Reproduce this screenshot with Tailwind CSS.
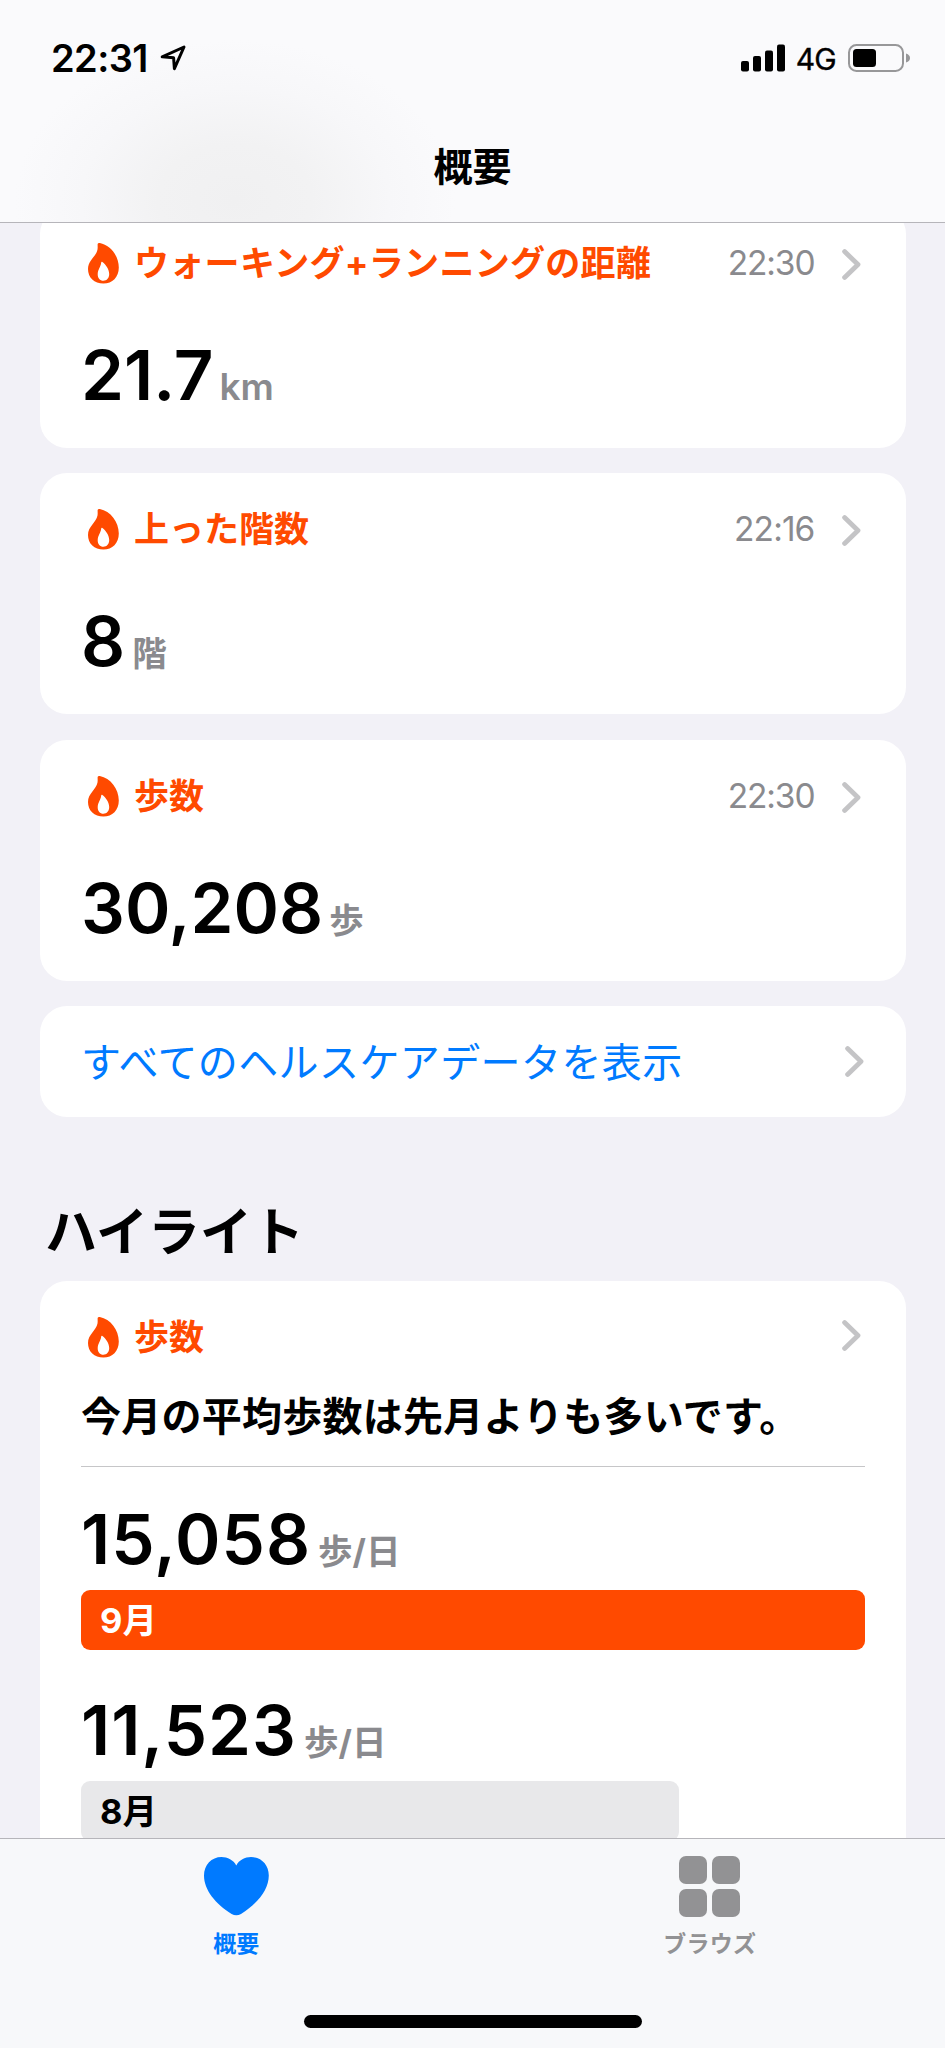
<!DOCTYPE html>
<html lang="ja">
<head>
<meta charset="utf-8">
<title>概要</title>
<script src="https://cdn.jsdelivr.net/npm/@tailwindcss/browser@4"></script>
</head>
<body class="bg-[#f2f1f7] text-black font-['Inter','Noto_Sans_CJK_JP',sans-serif]">
<svg class="hidden">
  <symbol id="flame" viewBox="0 0 31 41"><path fill-rule="evenodd" d="M9.6 1.6C9.6.4 10.6-.1 11.8.1C22.5 2.2 30.8 13 30.8 24.5C30.8 34.2 24.5 40.6 15.4 40.6C6.3 40.6 0 34.6 0 26C0 17.5 8.2 13.5 9.5 6.5C9.8 4.8 9.6 3.2 9.6 1.6ZM13.2 19.4C12.8 24 9.7 26.5 9.7 31.2C9.7 35.2 12 37.7 15.4 37.7C18.8 37.7 21.2 35 21.2 31C21.2 26.2 17.8 21.6 14.4 19C13.9 18.6 13.3 18.7 13.2 19.4Z"/></symbol>
  <symbol id="chevron" viewBox="0 0 19 31"><path d="M2.6 2.6L16 15.5L2.6 28.4" fill="none" stroke="currentColor" stroke-width="4.8" stroke-linecap="round" stroke-linejoin="round"/></symbol>
</svg>
<div class="flex h-[2048px] w-[945px] flex-col overflow-hidden">
  <header class="relative z-10 flex h-[223px] shrink-0 flex-col border-b border-[#b6b5ba] bg-[#fafafc] bg-[radial-gradient(ellipse_220px_160px_at_235px_200px,#f0f0f1_0%,#f2f2f3_35%,#f7f7f9_70%,#fafafc_100%)]">
    <div class="flex h-[116px] items-center pr-[35px] pl-[51px]">
      <span class="text-[38px] leading-none font-semibold tracking-[-0.6px]">22:31</span>
      <svg class="ml-[12px] h-[26px] w-[26px]" viewBox="0 0 26 26"><path d="M2.2 11.8L24 2L14.4 23.6L13.6 12.8Z" fill="none" stroke="#000" stroke-width="3" stroke-linejoin="round"/></svg>
      <svg class="ml-auto h-[28px] w-[44px]" viewBox="0 0 44 28"><rect x="0" y="17" width="8" height="10.5" rx="2"/><rect x="12" y="12" width="8" height="15.500" rx="2"/><rect x="24" y="6.500" width="8" height="21" rx="2"/><rect x="36" y="0.500" width="8" height="27" rx="2"/></svg>
      <span class="ml-[11px] pt-[2px] text-[30px] leading-none tracking-[-0.7px] [-webkit-text-stroke:0.4px_black]">4G</span>
      <svg class="ml-[12px] h-[28px] w-[62px]" viewBox="0 0 62 28"><rect x="1" y="1" width="54" height="26" rx="7.500" fill="none" stroke="#979799" stroke-width="2"/><rect x="5" y="5" width="23" height="18" rx="3.500"/><path d="M58 9.500C60.800 10.500 62 12 62 14S60.800 17.500 58 18.500Z" fill="#979799"/></svg>
    </div>
    <h1 class="flex h-[101px] items-center justify-center text-[39px] leading-none font-bold">概要</h1>
  </header>

  <main class="-mt-[16px] flex h-[1631px] shrink-0 flex-col overflow-hidden px-[40px]">
    <section class="mr-[-0.5px] mb-[25px] h-[241px] shrink-0 rounded-[27px] bg-white px-[41px] pt-[32px]">
      <div class="flex h-[48px] items-center">
        <svg class="ml-[7px] h-[41px] w-[31px] fill-[#ff4a00]"><use href="#flame"/></svg>
        <h2 class="ml-[15px] text-[35px] leading-none font-bold tracking-[0.3px] whitespace-nowrap text-[#ff4a00]">ウォーキング+ランニングの距離</h2>
        <time class="ml-auto pt-[2px] text-[33.5px] leading-none tracking-[-1.1px] text-[#8a8a8e]">22:30</time>
        <svg class="mt-[3px] mr-[4px] ml-[27px] h-[31px] w-[19px] text-[#c4c4c6]"><use href="#chevron"/></svg>
      </div>
      <p class="mt-[54px] flex h-[69px] items-baseline leading-[69px]"><span class="text-[69px] font-semibold">21.7</span><span class="ml-[6px] text-[37px] font-semibold text-[#8a8a8e]">km</span></p>
    </section>
    <section class="mr-[-0.5px] mb-[26px] h-[241px] shrink-0 rounded-[27px] bg-white px-[41px] pt-[32px]">
      <div class="flex h-[48px] items-center">
        <svg class="ml-[7px] h-[41px] w-[31px] fill-[#ff4a00]"><use href="#flame"/></svg>
        <h2 class="ml-[15px] text-[35px] leading-none font-bold whitespace-nowrap text-[#ff4a00]">上った階数</h2>
        <time class="ml-auto pt-[2px] text-[33.5px] leading-none tracking-[-0.9px] text-[#8a8a8e]">22:16</time>
        <svg class="mt-[3px] mr-[4px] ml-[27px] h-[31px] w-[19px] text-[#c4c4c6]"><use href="#chevron"/></svg>
      </div>
      <p class="mt-[54px] flex h-[69px] items-baseline leading-[69px]"><span class="text-[69px] font-semibold">8</span><span class="ml-[7px] text-[34.5px] font-bold text-[#8a8a8e]">階</span></p>
    </section>
    <section class="mr-[-0.5px] mb-[25px] h-[241px] shrink-0 rounded-[27px] bg-white px-[41px] pt-[32px]">
      <div class="flex h-[48px] items-center">
        <svg class="ml-[7px] h-[41px] w-[31px] fill-[#ff4a00]"><use href="#flame"/></svg>
        <h2 class="ml-[15px] text-[35px] leading-none font-bold whitespace-nowrap text-[#ff4a00]">歩数</h2>
        <time class="ml-auto pt-[2px] text-[33.5px] leading-none tracking-[-1.1px] text-[#8a8a8e]">22:30</time>
        <svg class="mt-[3px] mr-[4px] ml-[27px] h-[31px] w-[19px] text-[#c4c4c6]"><use href="#chevron"/></svg>
      </div>
      <p class="mt-[54px] flex h-[69px] items-baseline leading-[69px]"><span class="text-[69px] font-semibold">30,208</span><span class="ml-[6px] text-[34.5px] font-bold text-[#8a8a8e]">歩</span></p>
    </section>
    <a class="mr-[-0.5px] flex h-[111px] shrink-0 items-center justify-between rounded-[27px] bg-white pr-[42px] pl-[41px]">
      <span class="pt-[2px] text-[40px] leading-none tracking-[0.4px] whitespace-nowrap text-[#007aff]">すべてのヘルスケアデータを表示</span>
      <svg class="h-[31px] w-[19px] text-[#c4c4c6]"><use href="#chevron"/></svg>
    </a>
    <h2 class="mt-[86px] ml-[5px] h-[60px] shrink-0 text-[52px] leading-[60px] font-bold">ハイライト</h2>
    <section class="mr-[-0.5px] mt-[18px] h-[700px] shrink-0 rounded-[27px] bg-white px-[41px] pt-[32px]">
      <div class="flex h-[48px] items-center">
        <svg class="ml-[7px] h-[41px] w-[31px] fill-[#ff4a00]"><use href="#flame"/></svg>
        <h2 class="ml-[15px] text-[35px] leading-none font-bold whitespace-nowrap text-[#ff4a00]">歩数</h2>
        <svg class="mr-[4px] mb-[3px] ml-auto h-[31px] w-[19px] text-[#c4c4c6]"><use href="#chevron"/></svg>
      </div>
      <p class="mt-[30px] h-[50px] text-[40px] leading-[52px] font-bold tracking-[0.25px] whitespace-nowrap">今月の平均歩数は先月よりも多いです。</p>
      <hr class="mt-[25px] border-t border-[#c6c6c8]">
      <p class="mt-[38px] flex h-[69px] items-baseline leading-[69px]"><span class="text-[69px] font-semibold tracking-[1px]">15,058</span><span class="ml-[7px] text-[34.5px] font-bold text-[#8a8a8e]">歩/日</span></p>
      <div class="mt-[16px] flex h-[60px] items-center rounded-[9px] bg-[#ff4a00] pt-[2px] pl-[19px] text-[34.5px] leading-none font-bold text-white">9月</div>
      <p class="mt-[46px] flex h-[69px] items-baseline leading-[69px]"><span class="text-[69px] font-semibold tracking-[1px]">11,523</span><span class="ml-[7px] text-[34.5px] font-bold text-[#8a8a8e]">歩/日</span></p>
      <div class="mt-[16px] flex h-[60px] w-[598px] items-center rounded-[9px] bg-[#e8e8ea] pt-[2px] pl-[19px] text-[34.5px] leading-none font-bold">8月</div>
    </section>
  </main>

  <nav class="relative z-10 flex h-[210px] shrink-0 flex-col items-center border-t border-[#b6b5ba] bg-[#f7f8fa]">
    <div class="grid h-[176px] w-full grid-cols-2 pt-[17px]">
      <a class="flex flex-col items-center text-[#007aff]">
        <svg class="h-[60px] w-[65px]" viewBox="0 0 65 60"><path fill="currentColor" d="M32.300 9.500C35 4 41 1 47 1C57.500 1 64.800 9 64.800 19.500C64.800 34 53 48 37 58C34 59.800 30.600 59.800 27.600 58C11.500 48 0 34 0 19.500C0 9 7.500 1 17.500 1C23.500 1 29.500 4 32.300 9.500Z"/></svg>
        <span class="mt-[16px] text-[23px] leading-[24px] font-bold">概要</span>
      </a>
      <a class="flex flex-col items-center pl-[2px] text-[#929294]">
        <svg class="h-[61px] w-[61px]" viewBox="0 0 61 61" fill="currentColor"><rect width="28" height="28" rx="7"/><rect x="33" width="28" height="28" rx="7"/><rect y="33" width="28" height="28" rx="7"/><rect x="33" y="33" width="28" height="28" rx="7"/></svg>
        <span class="mt-[15px] text-[23px] leading-[24px] font-bold tracking-[0.3px]">ブラウズ</span>
      </a>
    </div>
    <div class="h-[13px] w-[338px] rounded-full bg-black"></div>
  </nav>
</div>
</body>
</html>
